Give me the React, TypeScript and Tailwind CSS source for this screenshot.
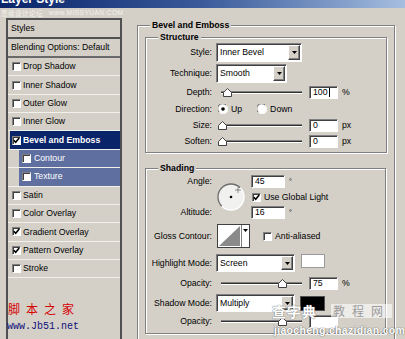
import clsx from 'clsx'
import type { ReactNode } from 'react'

const sunken =
  'border border-t-[#808080] border-l-[#808080] border-b-white border-r-white shadow-[inset_1px_1px_0_#404040]'

function Check({ checked, className }: { checked?: boolean; className?: string }) {
  return (
    <span
      className={clsx(
        'relative inline-flex h-[9px] w-[9px] shrink-0 items-center justify-center bg-white',
        sunken,
        className,
      )}
    >
      {checked && (
        <svg width="7" height="7" viewBox="0 0 7 7" className="absolute">
          <path d="M0.8 3.2L2.7 5.2L6.2 1" fill="none" stroke="#000" strokeWidth="1.6" />
        </svg>
      )}
    </span>
  )
}

function Radio({ checked }: { checked?: boolean }) {
  return (
    <svg width="10" height="10" viewBox="0 0 10 10" className="shrink-0">
      <circle cx="5" cy="5" r="4.5" fill="#fff" />
      <path d="M1 8A4.5 4.5 0 0 1 8 1" fill="none" stroke="#707070" strokeWidth="1" />
      <path d="M8.5 1.8A4.5 4.5 0 0 1 1.8 8.5" fill="none" stroke="#fff" strokeWidth="1" />
      {checked && <circle cx="5" cy="5" r="1.8" fill="#000" />}
    </svg>
  )
}

function Field({ value, w = 'w-[29px]', caret }: { value: string; w?: string; caret?: boolean }) {
  return (
    <div className={clsx('flex h-[13px] items-center bg-white pl-[3px]', w, sunken)}>
      {value}
      {caret && <span className="ml-px inline-block h-[9px] w-px bg-black" />}
    </div>
  )
}

function Dropdown({ value, w }: { value: string; w: string }) {
  return (
    <div className={clsx('flex h-full bg-white p-px', w, sunken)}>
      <span className="flex flex-1 items-center pl-[2px]">{value}</span>
      <span className="flex w-[12px] items-center justify-center border border-t-white border-l-white border-r-[#404040] border-b-[#404040] bg-[#d4d0c8] shadow-[inset_-1px_-1px_0_#808080]">
        <svg width="5" height="3" viewBox="0 0 5 3">
          <path d="M0 0h5L2.5 3z" fill="#000" />
        </svg>
      </span>
    </div>
  )
}

function Slider({ pos }: { pos: string }) {
  return (
    <div className="relative ml-[2px] h-[13px] w-[84px]">
      <div className="absolute top-[5px] right-0 left-[3px] h-[3px] border-t border-b border-t-[#808080] border-b-white bg-[#303030]" />
      <svg className={clsx('absolute top-[2px]', pos)} width="9" height="9" viewBox="0 0 9 9">
        <path d="M0.5 8.5V4.5L4.5 0.5L8.5 4.5V8.5Z" fill="#fff" stroke="#404040" />
      </svg>
    </div>
  )
}

function Row({ label, className, children }: { label: string; className?: string; children?: ReactNode }) {
  return (
    <div className={clsx('flex items-center', className)}>
      <span className="w-[66px] text-right">{label}</span>
      <div className="ml-[4px] flex h-full items-center">{children}</div>
    </div>
  )
}

function SliderRow({
  label,
  pos,
  value,
  unit,
  className,
}: {
  label: string
  pos: string
  value: string
  unit?: string
  className?: string
}) {
  return (
    <Row label={label} className={clsx('h-[14px]', className)}>
      <Slider pos={pos} />
      <div className="ml-[7px]">
        <Field value={value} caret={value === '100'} />
      </div>
      {unit && <span className="ml-[4px]">{unit}</span>}
    </Row>
  )
}

function Group({ title, className, children }: { title: string; className?: string; children?: ReactNode }) {
  return (
    <div
      className={clsx(
        'relative border border-[#808080] shadow-[inset_1px_1px_0_#fff,1px_1px_0_#fff]',
        className,
      )}
    >
      <span className="absolute -top-[7px] left-[12px] bg-[#d4d0c8] px-[2px] leading-[12px] font-bold">
        {title}
      </span>
      {children}
    </div>
  )
}

const items = [
  { label: 'Drop Shadow' },
  { label: 'Inner Shadow' },
  { label: 'Outer Glow' },
  { label: 'Inner Glow' },
  { label: 'Bevel and Emboss', checked: true, active: true },
  { label: 'Contour', sub: true },
  { label: 'Texture', sub: true },
  { label: 'Satin' },
  { label: 'Color Overlay' },
  { label: 'Gradient Overlay', checked: true },
  { label: 'Pattern Overlay', checked: true },
  { label: 'Stroke' },
]

export default function App() {
  return (
    <div className="relative h-[339px] w-[405px] overflow-hidden bg-[#d4d0c8] font-['Liberation_Sans',Arial,sans-serif] text-[8.7px] leading-none text-black">
      {/* title bar, cut at the top */}
      <div className="h-[8px] overflow-hidden bg-gradient-to-r from-[#0a246a] via-[#3a5a9a] to-[#a6bedf]">
        <div className="-mt-[7px] pl-[1px] text-[12px] leading-[13px] font-bold text-white">Layer Style</div>
      </div>
      <div className="flex h-[10px] items-center gap-[6px] pl-[1px] font-['Noto_Sans_CJK_SC',sans-serif] text-[6.5px] tracking-[0.5px] text-[#f2f1ec]">
        <span>思缘设计论坛</span>
        <span className="font-['Liberation_Sans',sans-serif]">www.MISSYUAN.COM</span>
      </div>

      <div className="flex items-start pl-[6px]">
        {/* styles list */}
        <div className="h-[330px] w-[116px] border-2 border-[#505050]">
          <div className="flex h-[19px] items-center border-b-2 border-b-[#505050] pl-[3px]">Styles</div>
          <div className="flex h-[19px] items-center border-b-2 border-b-[#6a6a6a] pl-[3px]">Blending Options: Default</div>
          {items.map((it) => (
            <div key={it.label} className="flex h-[18.36px] border-b border-b-[#f1f0eb]">
              <div
                className={clsx(
                  'flex flex-1 items-center',
                  it.active && 'ml-[2px] bg-[#0a246a] font-bold text-white',
                  it.sub && 'ml-[11px] bg-[#5f6f9f] text-white',
                )}
              >
                <Check checked={it.checked} className={it.sub ? 'ml-[3px]' : it.active ? 'ml-[2px]' : 'ml-[4px]'} />
                <span className={it.sub ? 'ml-[3px]' : 'ml-[2px]'}>{it.label}</span>
              </div>
            </div>
          ))}
        </div>

        {/* Bevel and Emboss */}
        <Group title="Bevel and Emboss" className="mt-[7px] ml-[15px] h-[330px] w-[258px] pt-[11px] pl-[7px]">
          <Group title="Structure" className="h-[116px] w-[242px] pt-[5px]">
            <Row label="Style:" className="h-[19px]">
              <Dropdown value="Inner Bevel" w="w-[86px]" />
            </Row>
            <Row label="Technique:" className="mt-[2px] h-[19px]">
              <Dropdown value="Smooth" w="w-[71px]" />
            </Row>
            <SliderRow label="Depth:" pos="left-[5px]" value="100" unit="%" className="mt-[2px]" />
            <Row label="Direction:" className="mt-[3px] h-[14px]">
              <span className="ml-[2px]">
                <Radio checked />
              </span>
              <span className="ml-[3px]">Up</span>
              <span className="ml-[15px]">
                <Radio />
              </span>
              <span className="ml-[3px]">Down</span>
            </Row>
            <SliderRow label="Size:" pos="left-0" value="0" unit="px" className="mt-[2px]" />
            <SliderRow label="Soften:" pos="left-0" value="0" unit="px" className="mt-[2px]" />
          </Group>

          <Group title="Shading" className="mt-[15px] h-[166px] w-[241px] pt-[6px]">
            <div className="flex h-[44px]">
              <div className="flex w-[66px] flex-col justify-between text-right">
                <span className="flex h-[13px] items-center justify-end">Angle:</span>
                <span className="flex h-[13px] items-center justify-end">Altitude:</span>
              </div>
              <svg className="mt-[8px] ml-[5px]" width="28" height="28" viewBox="0 0 28 28">
                <circle cx="14" cy="14" r="13" fill="#f1f1ef" />
                <path d="M4.8 23.2A13 13 0 0 1 23.2 4.8" fill="none" stroke="#6e6e6e" strokeWidth="1.3" />
                <path d="M23.2 4.8A13 13 0 0 1 4.8 23.2" fill="none" stroke="#ffffff" strokeWidth="1.3" />
                <circle cx="14" cy="14" r="1.3" fill="#000" />
                <path d="M21 4.5v5M18.5 7h5" stroke="#333" strokeWidth="1" strokeDasharray="1 1" />
              </svg>
              <div className="ml-[6px] flex flex-col">
                <div className="flex h-[13px] items-center">
                  <Field value="45" w="w-[34px]" />
                  <span className="ml-[4px] text-[7px]">°</span>
                </div>
                <div className="mt-[4px] flex h-[10px] items-center">
                  <Check checked className="ml-[1px]" />
                  <span className="ml-[3px]">Use Global Light</span>
                </div>
                <div className="mt-[4px] flex h-[13px] items-center">
                  <Field value="16" w="w-[34px]" />
                  <span className="ml-[4px] text-[7px]">°</span>
                </div>
              </div>
            </div>

            <Row label="Gloss Contour:" className="mt-[5px] h-[24px]">
              <svg className="ml-px" width="33" height="24" viewBox="0 0 33 24">
                <rect x="0.5" y="0.5" width="32" height="23" fill="#fff" stroke="#404040" />
                <path d="M2 22L23 2V22Z" fill="#8a8a8a" />
                <path d="M24.5 1V23" stroke="#808080" />
                <path d="M26 5h5L28.5 8z" fill="#000" />
              </svg>
              <Check className="ml-[13px]" />
              <span className="ml-[3px]">Anti-aliased</span>
            </Row>

            <Row label="Highlight Mode:" className="mt-[6px] h-[18px]">
              <Dropdown value="Screen" w="w-[79px]" />
              <div className="ml-[6px] h-[14px] w-[24px] self-start border border-[#9a9a9a] bg-white" />
            </Row>
            <SliderRow label="Opacity:" pos="left-[60px]" value="75" unit="%" className="mt-[4px] h-[13px]" />
            <Row label="Shadow Mode:" className="mt-[4px] h-[18px]">
              <Dropdown value="Multiply" w="w-[79px]" />
              <div className="ml-[5px] h-[15px] w-[25px] border border-[#505050] bg-black" />
            </Row>
            {/* value and unit of this row sit under the site watermark */}
            <SliderRow label="Opacity:" pos="left-[60px]" value="" className="mt-[2px] h-[13px]" />
          </Group>
        </Group>
      </div>

      {/* site watermarks */}
      <div className="absolute top-[303px] left-[8px] font-['Noto_Sans_CJK_SC',sans-serif] text-[12px] leading-none tracking-[6px] text-[#d40000]">
        脚本之家
      </div>
      <div className="absolute top-[322px] left-[7px] font-['Liberation_Mono',monospace] text-[10px] leading-none text-[#10107a]">
        www.Jb51.net
      </div>
      <div className="absolute top-[304px] left-[272px] flex items-center font-['Noto_Sans_CJK_SC',sans-serif]">
        <span className="text-[14px] leading-none font-bold tracking-[1px] text-white [text-shadow:0_0_1px_#777,0_0_1px_#777]">
          查字典
        </span>
        <span className="ml-[14px] bg-white/60 px-[2px] text-[12px] leading-[14px] tracking-[7px] text-[#9b9b9b]">
          教程网
        </span>
      </div>
      <div className="absolute top-[325px] left-[274px] text-[10.5px] leading-none font-bold tracking-[0.3px] text-white [text-shadow:0_0_1px_#666,0_0_1px_#666]">
        jiaocheng.chazidian.com
      </div>
    </div>
  )
}
